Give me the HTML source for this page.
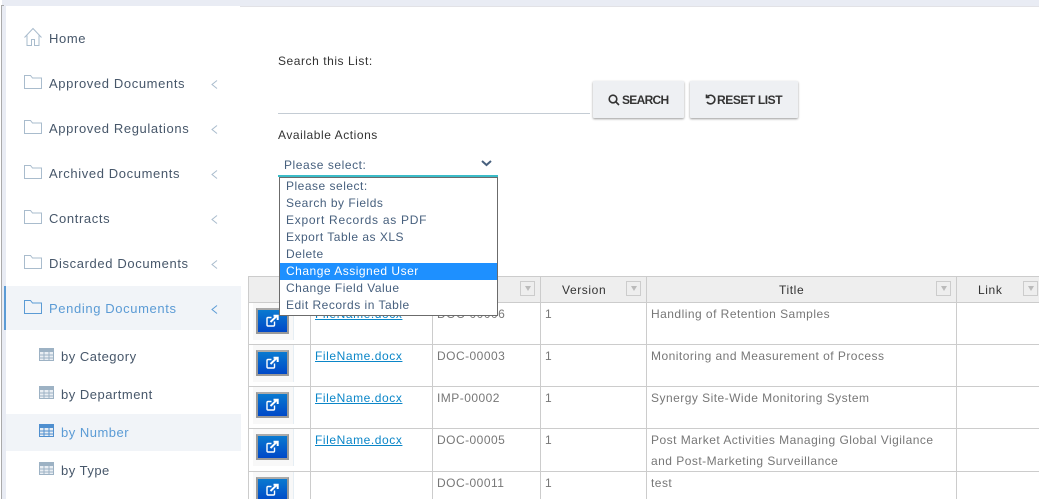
<!DOCTYPE html>
<html><head><meta charset="utf-8"><style>
html,body{margin:0;padding:0;width:1039px;height:499px;overflow:hidden;background:#fff}
body{position:relative;font-family:"Liberation Sans",sans-serif;font-size:12px}
.a{position:absolute;white-space:nowrap}
svg{position:absolute;overflow:visible}
.n{font-size:13px;letter-spacing:.62px;color:#47576a;line-height:16px}
.s{font-size:13px;letter-spacing:.5px;color:#47576a;line-height:16px}
.l{background:#ccc;position:absolute}
.t{font-size:12px;letter-spacing:.47px;color:#777;line-height:16px}
.h{font-size:12px;letter-spacing:.55px;color:#333;line-height:16px}
.f{position:absolute;top:281px;width:13px;height:13px;border:1px solid #ccc;box-sizing:content-box;background:#eee}
.f:after{content:"";position:absolute;left:4px;top:4px;border:3px solid transparent;border-top:5px solid #bbb;border-bottom:0}
.o{height:17px;line-height:17px;padding-left:6px;font-size:12px;letter-spacing:.5px;color:#47607e;white-space:nowrap}
.b{position:absolute;left:256px;width:29px;height:22px;border:2px solid #999;border-top-color:#aaa;background:linear-gradient(#0a7ad0,#0048c8)}
.cell{position:absolute;left:253px;width:40px;background:#f8f8f8;border-right:1px solid #e6eef4}
a{color:#0b86c8;text-decoration:underline}
</style></head><body>
<div class="a" style="left:2px;top:0;width:1037px;height:6px;background:#e9ecf4"></div>
<div class="a" style="left:240px;top:6px;width:799px;height:1px;background:#e2e2e6"></div>
<div class="a" style="left:2px;top:6px;width:4px;height:493px;background:#e9ecf4"></div>
<div class="a" style="left:1px;top:5px;width:1px;height:494px;background:#aaa"></div>
<div class="a" style="left:1px;top:5px;width:3px;height:1px;background:#aaa"></div>
<div class="a" style="left:6px;top:6px;width:234px;height:493px;background:#fff;border-radius:4px 4px 0 0"></div>

<svg style="left:24px;top:28px" width="18" height="20" fill="none" stroke="#a9bccd" stroke-width="1"><path d="M.5 9.500L9 .5l8.500 9M3 7.500v10h4.500v-6h3v6H15v-10"/></svg>
<div class="a n" style="left:49px;top:31px">Home</div>

<svg style="left:24px;top:75px" width="18" height="14" fill="none" stroke="#a9bccd"><path d="M.5 13.500V.5h6l2 2.500h9v10.500z"/></svg>
<div class="a n" style="left:49px;top:76px">Approved Documents</div>
<svg style="left:211px;top:80px" width="7" height="10" fill="none" stroke="#a9bccd"><path d="M6 .5L1 4.500l5 4"/></svg>

<svg style="left:24px;top:120px" width="18" height="14" fill="none" stroke="#a9bccd"><path d="M.5 13.500V.5h6l2 2.500h9v10.500z"/></svg>
<div class="a n" style="left:49px;top:121px">Approved Regulations</div>
<svg style="left:211px;top:125px" width="7" height="10" fill="none" stroke="#a9bccd"><path d="M6 .5L1 4.500l5 4"/></svg>

<svg style="left:24px;top:165px" width="18" height="14" fill="none" stroke="#a9bccd"><path d="M.5 13.500V.5h6l2 2.500h9v10.500z"/></svg>
<div class="a n" style="left:49px;top:166px">Archived Documents</div>
<svg style="left:211px;top:170px" width="7" height="10" fill="none" stroke="#a9bccd"><path d="M6 .5L1 4.500l5 4"/></svg>

<svg style="left:24px;top:210px" width="18" height="14" fill="none" stroke="#a9bccd"><path d="M.5 13.500V.5h6l2 2.500h9v10.500z"/></svg>
<div class="a n" style="left:49px;top:211px">Contracts</div>
<svg style="left:211px;top:215px" width="7" height="10" fill="none" stroke="#a9bccd"><path d="M6 .5L1 4.500l5 4"/></svg>

<svg style="left:24px;top:255px" width="18" height="14" fill="none" stroke="#a9bccd"><path d="M.5 13.500V.5h6l2 2.500h9v10.500z"/></svg>
<div class="a n" style="left:49px;top:256px">Discarded Documents</div>
<svg style="left:211px;top:260px" width="7" height="10" fill="none" stroke="#a9bccd"><path d="M6 .5L1 4.500l5 4"/></svg>

<div class="a" style="left:4px;top:286px;width:237px;height:44px;background:#f1f4f8"></div>
<div class="a" style="left:4px;top:286px;width:2px;height:44px;background:#5b9bd5"></div>
<svg style="left:24px;top:300px" width="18" height="14" fill="none" stroke="#5b9bd5"><path d="M.5 13.500V.5h6l2 2.500h9v10.500z"/></svg>
<div class="a n" style="left:49px;top:301px;color:#5b9bd5">Pending Documents</div>
<svg style="left:211px;top:305px" width="7" height="10" fill="none" stroke="#5b9bd5"><path d="M6 .5L1 4.500l5 4"/></svg>

<div class="a" style="left:6px;top:414px;width:235px;height:37px;background:#f1f4f8"></div>

<svg style="left:39px;top:348px" width="15" height="13"><rect width="15" height="13" fill="#9db2c4"/><g fill="#e9eef3"><rect x="1" y="4" width="3.500" height="2.500"/><rect x="5.500" y="4" width="4" height="2.500"/><rect x="10.500" y="4" width="3.500" height="2.500"/><rect x="1" y="7.500" width="3.500" height="2"/><rect x="5.500" y="7.500" width="4" height="2"/><rect x="10.500" y="7.500" width="3.500" height="2"/><rect x="1" y="10.500" width="3.500" height="1.500"/><rect x="5.500" y="10.500" width="4" height="1.500"/><rect x="10.500" y="10.500" width="3.500" height="1.500"/></g></svg>
<div class="a s" style="left:61px;top:349px">by Category</div>
<svg style="left:39px;top:386px" width="15" height="13"><rect width="15" height="13" fill="#9db2c4"/><g fill="#e9eef3"><rect x="1" y="4" width="3.500" height="2.500"/><rect x="5.500" y="4" width="4" height="2.500"/><rect x="10.500" y="4" width="3.500" height="2.500"/><rect x="1" y="7.500" width="3.500" height="2"/><rect x="5.500" y="7.500" width="4" height="2"/><rect x="10.500" y="7.500" width="3.500" height="2"/><rect x="1" y="10.500" width="3.500" height="1.500"/><rect x="5.500" y="10.500" width="4" height="1.500"/><rect x="10.500" y="10.500" width="3.500" height="1.500"/></g></svg>
<div class="a s" style="left:61px;top:387px">by Department</div>
<svg style="left:39px;top:424px" width="15" height="13"><rect width="15" height="13" fill="#4f8fcf"/><g fill="#e9eef3"><rect x="1" y="4" width="3.500" height="2.500"/><rect x="5.500" y="4" width="4" height="2.500"/><rect x="10.500" y="4" width="3.500" height="2.500"/><rect x="1" y="7.500" width="3.500" height="2"/><rect x="5.500" y="7.500" width="4" height="2"/><rect x="10.500" y="7.500" width="3.500" height="2"/><rect x="1" y="10.500" width="3.500" height="1.500"/><rect x="5.500" y="10.500" width="4" height="1.500"/><rect x="10.500" y="10.500" width="3.500" height="1.500"/></g></svg>
<div class="a s" style="left:61px;top:425px;color:#5b9bd5">by Number</div>
<svg style="left:39px;top:462px" width="15" height="13"><rect width="15" height="13" fill="#9db2c4"/><g fill="#e9eef3"><rect x="1" y="4" width="3.500" height="2.500"/><rect x="5.500" y="4" width="4" height="2.500"/><rect x="10.500" y="4" width="3.500" height="2.500"/><rect x="1" y="7.500" width="3.500" height="2"/><rect x="5.500" y="7.500" width="4" height="2"/><rect x="10.500" y="7.500" width="3.500" height="2"/><rect x="1" y="10.500" width="3.500" height="1.500"/><rect x="5.500" y="10.500" width="4" height="1.500"/><rect x="10.500" y="10.500" width="3.500" height="1.500"/></g></svg>
<div class="a s" style="left:61px;top:463px">by Type</div>

<div class="a h" style="left:278px;top:53px">Search this List:</div>
<div class="a" style="left:278px;top:113px;width:312px;height:1px;background:#c4ccd4"></div>
<div class="a" style="left:593px;top:81px;width:91px;height:37px;background:#eef0f3;box-shadow:0 1px 2px rgba(0,0,0,.4);border-radius:1px"></div>
<svg style="left:608px;top:94px" width="12" height="12" fill="none" stroke="#333" stroke-width="1.600"><circle cx="5" cy="5" r="3.800"/><path d="M8 8l3 3"/></svg>
<div class="a" style="left:622px;top:92px;font-size:12px;font-weight:bold;color:#333;line-height:16px;letter-spacing:-.7px">SEARCH</div>
<div class="a" style="left:690px;top:81px;width:108px;height:37px;background:#eef0f3;box-shadow:0 1px 2px rgba(0,0,0,.4);border-radius:1px"></div>
<svg style="left:705px;top:94px" width="12" height="12" fill="none" stroke="#333" stroke-width="1.600"><path d="M2.500 2.500A4.300 4.300 0 1 1 2 8M1.500 .5v3h3"/></svg>
<div class="a" style="left:717px;top:92px;font-size:12px;font-weight:bold;color:#333;line-height:16px;letter-spacing:-.42px">RESET LIST</div>

<div class="a h" style="left:278px;top:127px">Available Actions</div>
<div class="a" style="left:284px;top:157px;font-size:12px;letter-spacing:.55px;color:#47607e;line-height:16px">Please select:</div>
<svg style="left:481px;top:160px" width="11" height="7" fill="none" stroke="#47607e" stroke-width="2"><path d="M1 1l4.500 4L10 1"/></svg>

<div class="a" style="left:249px;top:276px;width:790px;height:26px;background:#eee"></div>
<div class="l" style="left:248px;top:276px;width:791px;height:1px"></div>
<div class="l" style="left:248px;top:302px;width:791px;height:1px"></div>
<div class="l" style="left:248px;top:344px;width:791px;height:1px"></div>
<div class="l" style="left:248px;top:386px;width:791px;height:1px"></div>
<div class="l" style="left:248px;top:428px;width:791px;height:1px"></div>
<div class="l" style="left:248px;top:471px;width:791px;height:1px"></div>
<div class="l" style="left:248px;top:276px;width:1px;height:223px"></div>
<div class="l" style="left:310px;top:276px;width:1px;height:223px"></div>
<div class="l" style="left:432px;top:276px;width:1px;height:223px"></div>
<div class="l" style="left:540px;top:276px;width:1px;height:223px"></div>
<div class="l" style="left:646px;top:276px;width:1px;height:223px"></div>
<div class="l" style="left:956px;top:276px;width:1px;height:223px"></div>

<div class="f" style="left:520px"></div>
<div class="f" style="left:626px"></div>
<div class="f" style="left:936px"></div>
<div class="f" style="left:1023px"></div>
<div class="a h" style="left:562px;top:282px;letter-spacing:.6px">Version</div>
<div class="a h" style="left:779px;top:282px;letter-spacing:.6px">Title</div>
<div class="a h" style="left:978px;top:282px;letter-spacing:.6px">Link</div>

<div class="cell" style="top:303px;height:37px"></div>
<div class="cell" style="top:345px;height:37px"></div>
<div class="cell" style="top:387px;height:37px"></div>
<div class="cell" style="top:429px;height:37px"></div>
<div class="cell" style="top:472px;height:27px"></div>
<div class="b" style="top:308px"></div>
<div class="b" style="top:350px"></div>
<div class="b" style="top:392px"></div>
<div class="b" style="top:434px"></div>
<div class="b" style="top:477px"></div>
<svg style="left:266px;top:315px" width="13" height="12" fill="none" stroke="#fff" stroke-width="1.400"><path d="M8.500 6.500V10q0 1-1 1H2q-1 0-1-1V3.500q0-1 1-1h3.500"/><path d="M4.500 7L10.500 1.200M7.500 .8h4.200V5" stroke-width="2"/></svg>
<svg style="left:266px;top:357px" width="13" height="12" fill="none" stroke="#fff" stroke-width="1.400"><path d="M8.500 6.500V10q0 1-1 1H2q-1 0-1-1V3.500q0-1 1-1h3.500"/><path d="M4.500 7L10.500 1.200M7.500 .8h4.200V5" stroke-width="2"/></svg>
<svg style="left:266px;top:399px" width="13" height="12" fill="none" stroke="#fff" stroke-width="1.400"><path d="M8.500 6.500V10q0 1-1 1H2q-1 0-1-1V3.500q0-1 1-1h3.500"/><path d="M4.500 7L10.500 1.200M7.500 .8h4.200V5" stroke-width="2"/></svg>
<svg style="left:266px;top:441px" width="13" height="12" fill="none" stroke="#fff" stroke-width="1.400"><path d="M8.500 6.500V10q0 1-1 1H2q-1 0-1-1V3.500q0-1 1-1h3.500"/><path d="M4.500 7L10.500 1.200M7.500 .8h4.200V5" stroke-width="2"/></svg>
<svg style="left:266px;top:484px" width="13" height="12" fill="none" stroke="#fff" stroke-width="1.400"><path d="M8.500 6.500V10q0 1-1 1H2q-1 0-1-1V3.500q0-1 1-1h3.500"/><path d="M4.500 7L10.500 1.200M7.500 .8h4.200V5" stroke-width="2"/></svg>

<div class="a t" style="left:315px;top:306px;letter-spacing:.57px"><a>FileName.docx</a></div>
<div class="a t" style="left:437px;top:306px">DOC-00006</div>
<div class="a t" style="left:545px;top:306px">1</div>
<div class="a t" style="left:651px;top:306px">Handling of Retention Samples</div>
<div class="a t" style="left:315px;top:348px;letter-spacing:.57px"><a>FileName.docx</a></div>
<div class="a t" style="left:437px;top:348px">DOC-00003</div>
<div class="a t" style="left:545px;top:348px">1</div>
<div class="a t" style="left:651px;top:348px">Monitoring and Measurement of Process</div>
<div class="a t" style="left:315px;top:390px;letter-spacing:.57px"><a>FileName.docx</a></div>
<div class="a t" style="left:437px;top:390px">IMP-00002</div>
<div class="a t" style="left:545px;top:390px">1</div>
<div class="a t" style="left:651px;top:390px">Synergy Site-Wide Monitoring System</div>
<div class="a t" style="left:315px;top:432px;letter-spacing:.57px"><a>FileName.docx</a></div>
<div class="a t" style="left:437px;top:432px">DOC-00005</div>
<div class="a t" style="left:545px;top:432px">1</div>
<div class="a t" style="left:651px;top:432px">Post Market Activities Managing Global Vigilance</div>
<div class="a t" style="left:651px;top:453px">and Post-Marketing Surveillance</div>
<div class="a t" style="left:437px;top:475px">DOC-00011</div>
<div class="a t" style="left:545px;top:475px">1</div>
<div class="a t" style="left:651px;top:475px">test</div>

<div class="a" style="left:278px;top:175px;width:220px;height:2px;background:#3bbcc8"></div>
<div class="a" style="left:279px;top:177px;width:217px;height:137px;background:#fff;border:1px solid #6b6b6b">
<div class="o">Please select:</div>
<div class="o">Search by Fields</div>
<div class="o" style="letter-spacing:.72px">Export Records as PDF</div>
<div class="o">Export Table as XLS</div>
<div class="o">Delete</div>
<div class="o" style="background:#1e90ff;color:#fff">Change Assigned User</div>
<div class="o">Change Field Value</div>
<div class="o">Edit Records in Table</div>
</div>
</body></html>
